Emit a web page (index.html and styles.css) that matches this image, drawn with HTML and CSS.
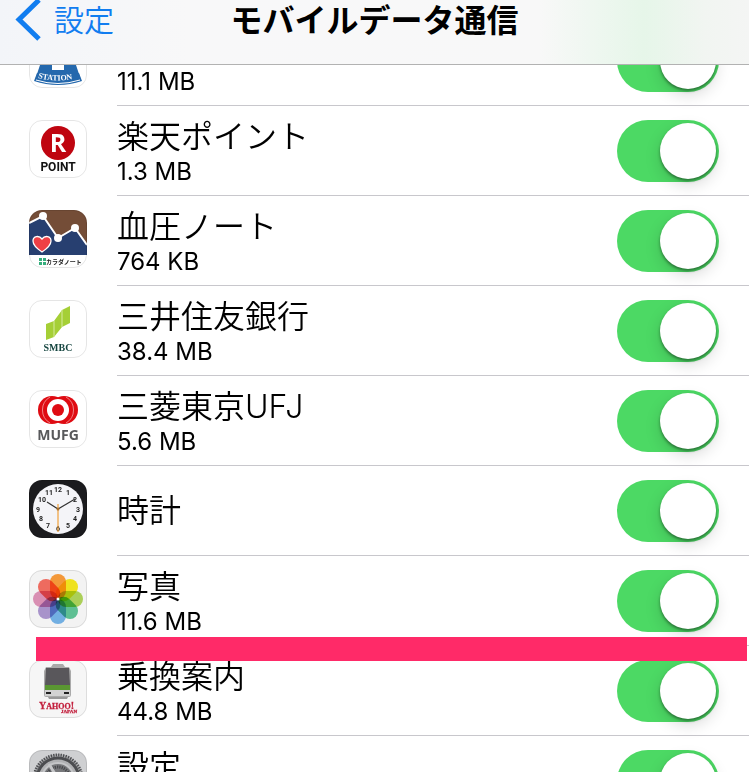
FILE: index.html
```html
<!DOCTYPE html>
<html lang="ja">
<head>
    <meta charset="UTF-8">
    <meta name="viewport" content="width=device-width, initial-scale=1.0">
    <title>モバイルデータ通信</title>
    <link rel="stylesheet" href="styles.css">
</head>
<body>
    <header class="navbar">
        <a class="back" href="#">
            <svg class="chevron" viewBox="0 0 26 42" aria-hidden="true"><path d="M24 1L4 20.500l20 19.500" fill="none" stroke="#117df0" stroke-width="5"/></svg>
            設定
        </a>
        <h1 class="title">モバイルデータ通信</h1>
    </header>

    <main class="app-list">
        <div class="app-row">
            <svg class="app-icon" viewBox="0 0 58 58" aria-hidden="true">
                <path d="M12 4h34v28l6 18q-23 8-46 0l6-18z" fill="#2468ad"/>
                <path d="M23 8h12v32H23z" fill="#fff"/>
                <path d="M8 43q21 6 42 0l3 8q-24 8-48 0z" fill="#2468ad"/>
                <path d="M7 50q22 7 44 0" fill="none" stroke="#fff" stroke-width="1"/>
                <path id="arc" d="M9 48q20 5 40 0" fill="none"/>
                <text font-family="Liberation Serif" font-weight="bold" font-size="8" fill="#fff"><textPath href="#arc">STATION</textPath></text>
            </svg>
            <label class="info" for="app1"><span class="name">&nbsp;</span><span class="size">11.1 MB</span></label>
            <input class="switch" type="checkbox" id="app1" checked>
        </div>

        <div class="app-row">
            <svg class="app-icon" viewBox="0 0 58 58" aria-hidden="true">
                <circle cx="29" cy="23" r="17" fill="#bf0510"/>
                <text x="29" y="32" text-anchor="middle" class="icon-sans" font-size="25" fill="#fff">R</text>
                <text x="29" y="51" text-anchor="middle" class="icon-narrow" font-size="12" fill="#111">POINT</text>
            </svg>
            <label class="info" for="app2"><span class="name">楽天ポイント</span><span class="size">1.3 MB</span></label>
            <input class="switch" type="checkbox" id="app2" checked>
        </div>

        <div class="app-row">
            <svg class="app-icon" viewBox="0 0 58 58" aria-hidden="true">
                <path d="M0 0h58v45H0z" fill="#744d37"/>
                <path d="M0 13L14 6l15 22 17-10 12 17v10H0z" fill="#273f70"/>
                <path d="M0 13L14 6l15 22 17-10 12 17" fill="none" stroke="#fff" stroke-width="2"/>
                <g fill="#fff"><circle cx="14" cy="6" r="4"/><circle cx="29" cy="28" r="4"/><circle cx="46" cy="18" r="4"/></g>
                <path d="M13 42C7 38 4 34 4 31c0-5 6-6 9-2 3-4 9-3 9 2 0 3-3 7-9 11z" fill="#ef4045" stroke="#fff" stroke-width="1.3"/>
                <path d="M10 48h3v3h-3zm4 0h3v3h-3zm-4 4h3v3h-3zm4 0h3v3h-3z" fill="#35ad7c"/>
                <text x="17" y="54" font-family="Noto Sans CJK JP" font-weight="bold" font-size="6" fill="#222">カラダノート</text>
            </svg>
            <label class="info" for="app3"><span class="name">血圧ノート</span><span class="size">764 KB</span></label>
            <input class="switch" type="checkbox" id="app3" checked>
        </div>

        <div class="app-row">
            <svg class="app-icon" viewBox="0 0 58 58" aria-hidden="true">
                <path d="M17 24l8-3v16l-8 3zM25 21l8-11v17l-8 10zM33 10l8-4v17l-8 4z" fill="#a5cf36"/>
                <path d="M25 21v16M33 10v17" stroke="#d7eba0" stroke-width="1"/>
                <text x="29" y="51" text-anchor="middle" font-family="Liberation Serif" font-weight="bold" font-size="10" fill="#164640">SMBC</text>
            </svg>
            <label class="info" for="app4"><span class="name">三井住友銀行</span><span class="size">38.4 MB</span></label>
            <input class="switch" type="checkbox" id="app4" checked>
        </div>

        <div class="app-row">
            <svg class="app-icon" viewBox="0 0 58 58" aria-hidden="true">
                <g fill="#df0b12"><circle cx="23" cy="20" r="14"/><circle cx="35" cy="20" r="14"/></g>
                <path d="M21 7a15 15 0 0 0 0 26M37 7a15 15 0 0 1 0 26" fill="none" stroke="#f6b5b5" stroke-width=".7"/>
                <circle cx="29" cy="20" r="11" fill="#fff"/>
                <circle cx="29" cy="20" r="6" fill="#df0b12"/>
                <text x="29" y="50" text-anchor="middle" class="icon-sans" font-size="14" fill="#58595b">MUFG</text>
            </svg>
            <label class="info" for="app5"><span class="name">三菱東京UFJ</span><span class="size">5.6 MB</span></label>
            <input class="switch" type="checkbox" id="app5" checked>
        </div>

        <div class="app-row">
            <svg class="app-icon" viewBox="0 0 58 58" aria-hidden="true">
                <path d="M0 0h58v58H0z" fill="#1b1b1e"/>
                <circle cx="29" cy="29" r="25" fill="#f4f4f8"/>
                <g class="icon-narrow" font-size="7" fill="#222" text-anchor="middle">
                    <text x="29" y="12">12</text><text x="39" y="15">1</text><text x="46" y="22">2</text>
                    <text x="49" y="32">3</text><text x="46" y="41">4</text><text x="39" y="48">5</text>
                    <text x="29" y="51">6</text><text x="19" y="48">7</text><text x="12" y="41">8</text>
                    <text x="9" y="32">9</text><text x="13" y="22">10</text><text x="20" y="15">11</text>
                </g>
                <path d="M18 22l11 7 17-10" fill="none" stroke="#333" stroke-width="1.2"/>
                <path d="M29 24v28" stroke="#f0a03c" stroke-width="1.2"/>
                <circle cx="29" cy="29" r="1.5" fill="#a86f2c"/>
            </svg>
            <label class="info" for="app6"><span class="name">時計</span></label>
            <input class="switch" type="checkbox" id="app6" checked>
        </div>

        <div class="app-row">
            <svg class="app-icon" viewBox="0 0 58 58" aria-hidden="true">
                <path d="M0 0h58v58H0z" fill="#f3f3f3"/>
                <g class="petals">
                    <rect x="21" y="4" width="16" height="25" rx="8" fill="#ffa03c"/>
                    <rect x="21" y="4" width="16" height="25" rx="8" fill="#fbee20" transform="rotate(45 29 29)"/>
                    <rect x="21" y="4" width="16" height="25" rx="8" fill="#b4da5c" transform="rotate(90 29 29)"/>
                    <rect x="21" y="4" width="16" height="25" rx="8" fill="#62c99a" transform="rotate(135 29 29)"/>
                    <rect x="21" y="4" width="16" height="25" rx="8" fill="#78b8ee" transform="rotate(180 29 29)"/>
                    <rect x="21" y="4" width="16" height="25" rx="8" fill="#b09ad4" transform="rotate(225 29 29)"/>
                    <rect x="21" y="4" width="16" height="25" rx="8" fill="#e496bc" transform="rotate(270 29 29)"/>
                    <rect x="21" y="4" width="16" height="25" rx="8" fill="#fa7064" transform="rotate(315 29 29)"/>
                </g>
                <circle cx="29" cy="29" r="1.5" fill="#fff"/>
            </svg>
            <label class="info" for="app7"><span class="name">写真</span><span class="size">11.6 MB</span></label>
            <input class="switch" type="checkbox" id="app7" checked>
        </div>

        <div class="app-row">
            <svg class="app-icon" viewBox="0 0 58 58" aria-hidden="true">
                <path d="M0 0h58v58H0z" fill="#f6f6f6"/>
                <path d="M18 35h22l-2 4H20z" fill="#999"/>
                <path d="M24 4h10l2 3h4l2 4v24q0 2-2 2H17q-2 0-2-2V11l2-4h5z" fill="#aaa"/>
                <path d="M17 8h23l1 17H16z" fill="#59575b"/>
                <path d="M16 25h25v5H16z" fill="#5a9632"/>
                <path d="M16 30h25v6H16z" fill="#d2d2d2"/>
                <path d="M17 32h5v2h-5zm18 0h5v2h-5z" fill="#222"/>
                <g font-family="Liberation Serif" font-weight="bold" fill="#c3203e" stroke="#c3203e" stroke-width=".3">
                    <text x="10" y="49" font-size="10">Y<tspan font-size="8">AHOO</tspan>!</text>
                    <text x="32" y="53" font-size="5">JAPAN</text>
                </g>
            </svg>
            <label class="info" for="app8"><span class="name">乗換案内</span><span class="size">44.8 MB</span></label>
            <input class="switch" type="checkbox" id="app8" checked>
        </div>

        <div class="app-row">
            <svg class="app-icon" viewBox="0 0 58 58" aria-hidden="true">
                <path d="M0 0h58v58H0z" fill="#cfd0d2"/>
                <circle cx="29" cy="29" r="25" fill="#b0b1b3"/>
                <circle cx="29" cy="29" r="24" fill="none" stroke="#4c4d50" stroke-width="3" stroke-dasharray="1.3 1.2"/>
                <circle cx="29" cy="29" r="21" fill="none" stroke="#4c4d50" stroke-width="3"/>
                <circle cx="29" cy="29" r="16" fill="#77787b" stroke="#c5c6c8" stroke-width="2"/>
                <circle cx="29" cy="29" r="12" fill="none" stroke="#48494c" stroke-width="3" stroke-dasharray="1.3 1"/>
                <path d="M29 29h17M29 29l-9-15M29 29l-9 15" stroke="#c5c6c8" stroke-width="3"/>
            </svg>
            <label class="info" for="app9"><span class="name">設定</span><span class="size">&nbsp;</span></label>
            <input class="switch" type="checkbox" id="app9" checked>
        </div>
        <div class="marker"></div>
    </main>
</body>
</html>
```
FILE: styles.css
```css
* {
    box-sizing: border-box;
}

body {
    margin: 0;
    height: 100vh;
    overflow: hidden;
    background-color: #fff;
    color: #000;
    font-family: Inter, "Noto Sans CJK JP", sans-serif;
}

.navbar {
    position: fixed;
    top: 0;
    left: 0;
    right: 0;
    z-index: 2;
    display: grid;
    grid-template-columns: 1fr auto 1fr;
    align-items: start;
    height: 65px;
    padding: 0 15px;
    background: linear-gradient(to right, #f3f5f9, #f8f8f9 25%, #f8f8f8 72%, #e6f6e9 86%, #f1f5f1 94%, #f4f5f4);
    border-bottom: 1px solid #b2b2b2;
}

.back {
    display: flex;
    align-items: center;
    gap: 13px;
    height: 40px;
    color: #117df0;
    font-size: 30px;
    font-weight: 350;
    line-height: 36px;
    text-decoration: none;
}

.chevron {
    width: 26px;
    height: 42px;
}

.title {
    margin: 0;
    font-size: 32px;
    font-weight: 600;
    line-height: 42px;
}

.app-list {
    position: relative;
    height: 100%;
    padding-top: 16px;
    overflow: hidden;
}

.app-row {
    display: flex;
    align-items: center;
    height: 90px;
    padding: 0 30px 0 29px;
    background: linear-gradient(#c8c7cc, #c8c7cc) 117px 100% / 100% 1px no-repeat;
}

.app-icon {
    flex: none;
    align-self: flex-start;
    width: 58px;
    height: 58px;
    margin-top: 14px;
    border-radius: 13px;
    background-color: #fff;
    outline: 1px solid rgba(0, 0, 0, 0.1);
    outline-offset: -1px;
}

.icon-sans {
    font-family: "Open Sans", sans-serif;
    font-weight: 700;
}

.icon-narrow {
    font-family: Roboto, sans-serif;
    font-weight: 700;
}

.petals rect {
    mix-blend-mode: multiply;
}

.info {
    flex: 1;
    display: flex;
    flex-direction: column;
    margin-left: 30px;
}

.name {
    font-size: 32px;
    font-weight: 350;
    line-height: 36px;
}

.name:not(:only-child) {
    padding-top: 6px;
}

.size {
    font-size: 24px;
    line-height: 34px;
}

.switch {
    appearance: none;
    flex: none;
    display: flex;
    justify-content: flex-end;
    width: 102px;
    height: 62px;
    margin: 0;
    padding: 3px;
    border-radius: 31px;
    background-color: #ddd;
}

.switch:checked {
    background-color: #4cd964;
}

.switch::before {
    content: "";
    width: 56px;
    height: 56px;
    border-radius: 50%;
    background-color: #fff;
    box-shadow: 0 2px 3px rgba(0, 0, 0, 0.4), 0 6px 16px rgba(0, 0, 0, 0.15);
}

.marker {
    position: absolute;
    top: 637px;
    left: 36px;
    right: 2px;
    height: 24px;
    background-color: #ff2a68;
}
```
